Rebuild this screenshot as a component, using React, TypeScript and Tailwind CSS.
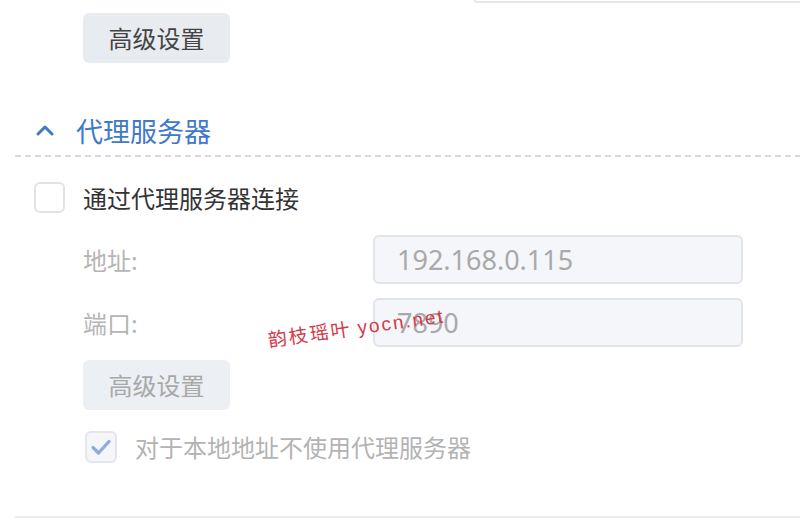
import React from "react";

const cjk = { fontFamily: '"Noto Sans CJK SC", "Noto Sans", sans-serif' };

function App() {
  return (
    <div className="relative w-[800px] h-[527px] bg-white overflow-hidden" style={cjk}>
      {/* previous input, cut off at the top */}
      <div className="ml-[474px] h-[3px] border-b-2 border-l-2 border-[#e3e6ea] rounded-bl-md" />

      <div className="pl-[83px] mt-[10px]">
        <button className="w-[147px] h-[50px] rounded-md bg-[#e8ecf1] text-[24px] text-[#444] leading-none">
          高级设置
        </button>
      </div>

      {/* section header */}
      <div className="flex items-center mt-[50px] pl-[35px] h-[34px]">
        <svg width="20" height="14" viewBox="0 0 20 14" className="mr-[21px]">
          <path d="M3 11 L10 4 L17 11" fill="none" stroke="#3f79c9" strokeWidth="3" strokeLinecap="round" strokeLinejoin="round" />
        </svg>
        <span className="text-[27px] text-[#3f79c9] leading-none">代理服务器</span>
      </div>

      <div className="ml-[15px] mt-[8px] h-[2px] bg-[linear-gradient(to_right,#d6dae0_65%,transparent_0)] bg-[length:10px_2px]" />

      {/* use proxy */}
      <div className="flex items-center pl-[34px] mt-[25px]">
        <div className="w-[31px] h-[31px] rounded-md border-2 border-[#dfe3e8] bg-white" />
        <span className="ml-[18px] text-[24px] text-[#333] leading-none">通过代理服务器连接</span>
      </div>

      <div className="pl-[83px] mt-[22px] flex flex-col gap-[14px]">
        <div className="flex items-center">
          <span className="w-[290px] text-[24px] text-[#b5b5b5] leading-none">地址:</span>
          <div className="w-[370px] h-[49px] rounded-md border-2 border-[#e1e4e9] bg-[#f5f6f9] flex items-center pl-[22px]">
            <span className="text-[27px] text-[#a9a9a9] leading-none" style={{ fontFamily: '"Noto Sans", sans-serif' }}>
              192.168.0.115
            </span>
          </div>
        </div>
        <div className="flex items-center">
          <span className="w-[290px] text-[24px] text-[#b5b5b5] leading-none">端口:</span>
          <div className="w-[370px] h-[49px] rounded-md border-2 border-[#e1e4e9] bg-[#f5f6f9] flex items-center pl-[22px]">
            <span className="text-[27px] text-[#a9a9a9] leading-none" style={{ fontFamily: '"Noto Sans", sans-serif' }}>
              7890
            </span>
          </div>
        </div>
      </div>

      <div className="pl-[83px] mt-[13px]">
        <button className="w-[147px] h-[50px] rounded-md bg-[#eceff3] text-[24px] text-[#a8a8a8] leading-none">
          高级设置
        </button>
      </div>

      {/* bypass for local */}
      <div className="flex items-center pl-[85px] mt-[21px]">
        <div className="w-[32px] h-[32px] rounded-md border-2 border-[#e3e6eb] bg-[#f4f6f9] flex items-center justify-center">
          <svg width="22" height="18" viewBox="0 0 22 18">
            <path d="M3 9.5 L8.5 15 L19 3.5" fill="none" stroke="#8cabdf" strokeWidth="3.2" strokeLinecap="round" strokeLinejoin="round" />
          </svg>
        </div>
        <span className="ml-[18px] text-[24px] text-[#b3b3b3] leading-none">对于本地地址不使用代理服务器</span>
      </div>

      <div className="absolute left-[15px] right-0 top-[516px] h-[2px] bg-[#eaedf0]" />

      {/* watermark */}
      <div className="absolute left-[268px] top-[329px] -rotate-[8deg] origin-left text-[19px] text-[#d23a4a] tracking-[2px] whitespace-nowrap leading-none">
        韵枝瑶叶 <span style={{ fontFamily: '"Liberation Sans", sans-serif' }}>yocn.net</span>
      </div>
    </div>
  );
}

export default App;
